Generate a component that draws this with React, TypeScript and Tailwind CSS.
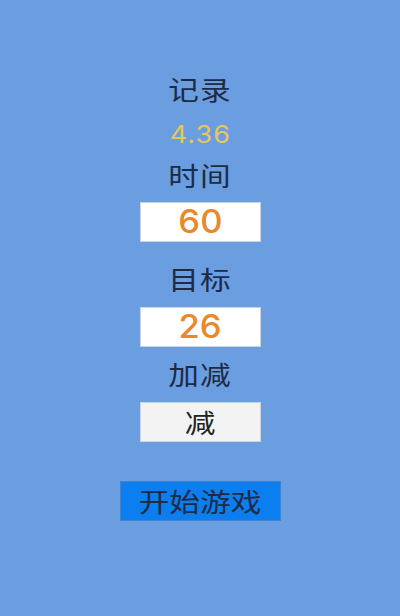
import React from "react";

const cjk = { fontFamily: '"Noto Sans CJK SC", "Liberation Sans", sans-serif' };
const num = { fontFamily: 'Inter, "Liberation Sans", sans-serif' };

export default function App() {
  return (
    <div className="w-[400px] h-[616px] bg-[#6a9ee1] flex flex-col items-center pt-[76px]" style={cjk}>
      <div className="h-[28px] leading-[25px] text-[26px] text-[#1e2b45] scale-x-[1.18] tracking-[1px]">记录</div>
      <div className="mt-[17px] h-[28px] leading-[27px] text-[24px] text-[#e8c65c] scale-x-[1.12] tracking-[1px]" style={num}>4.36</div>
      <div className="mt-[13px] h-[28px] leading-[25px] text-[26px] text-[#1e2b45] scale-x-[1.18] tracking-[1px]">时间</div>
      <div className="mt-[12px] w-[121px] h-[40px] bg-white border border-[#c9d4e2] flex items-center justify-center">
        <span className="text-[32px] font-medium text-[#e8892a] scale-x-[1.08] leading-none" style={num}>60</span>
      </div>
      <div className="mt-[24px] h-[28px] leading-[25px] text-[26px] text-[#1e2b45] scale-x-[1.18] tracking-[1px]">目标</div>
      <div className="mt-[13px] w-[121px] h-[40px] bg-white border border-[#c9d4e2] flex items-center justify-center">
        <span className="text-[32px] font-medium text-[#e8892a] scale-x-[1.08] leading-none" style={num}>26</span>
      </div>
      <div className="mt-[14px] h-[28px] leading-[25px] text-[26px] text-[#1e2b45] scale-x-[1.18] tracking-[1px]">加减</div>
      <div className="mt-[13px] w-[121px] h-[40px] bg-[#f3f3f3] border border-[#c9d4e2] flex items-center justify-center">
        <span className="text-[26px] text-[#222] scale-x-[1.18] leading-none">减</span>
      </div>
      <div className="mt-[39px] w-[161px] h-[40px] bg-[#0b7ef0] border border-[#3b83d6] flex items-center justify-center">
        <span className="text-[26px] text-[#1e2b45] scale-x-[1.18] leading-none">开始游戏</span>
      </div>
    </div>
  );
}
